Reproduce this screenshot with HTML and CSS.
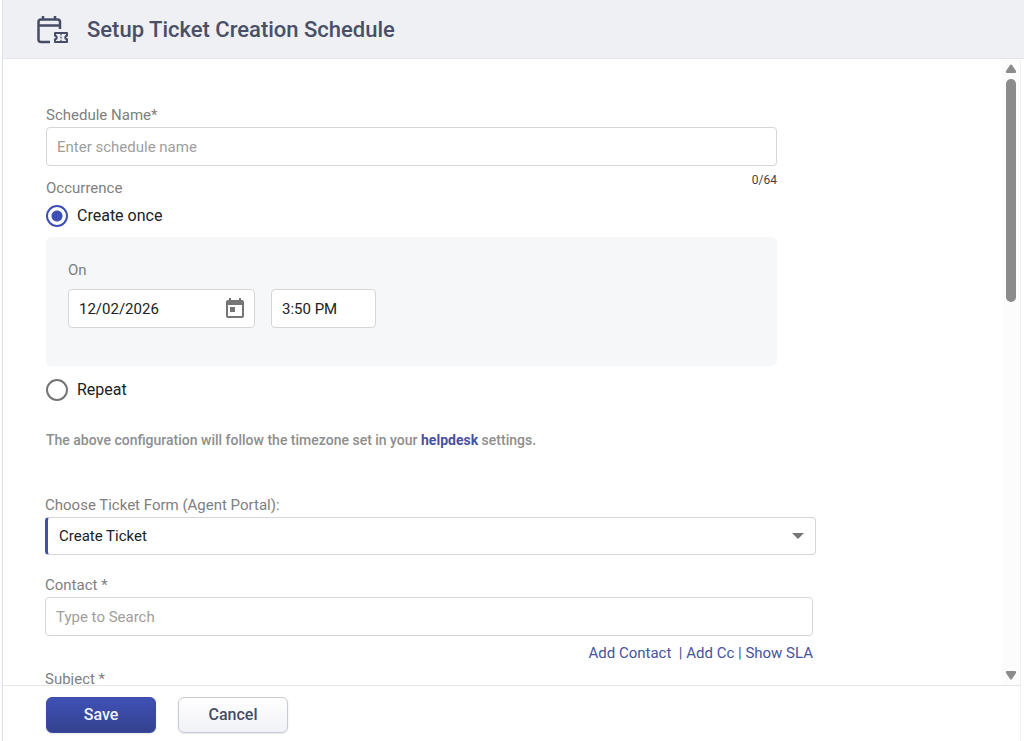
FILE: index.html
```
<!DOCTYPE html>
<html lang="en">
<head>
    <meta charset="UTF-8">
    <meta name="viewport" content="width=device-width, initial-scale=1.0">
    <title>Setup Ticket Creation Schedule</title>
    <link rel="stylesheet" href="styles.css">
</head>
<body>
    <div class="page">
        <header class="header">
            <svg class="header-icon" width="34" height="30" viewBox="0 0 34 30" fill="none" stroke="#474c66" aria-hidden="true">
                <path d="M15 27H6a2.500 2.500 0 0 1-2.500-2.500V7A2.500 2.500 0 0 1 6 4.500h16.500A2.500 2.500 0 0 1 25 7v7" stroke-width="2.500"/>
                <path d="M3.500 10.500h21" stroke-width="2.500"/>
                <path d="M8 1v4M20 1v4" stroke-width="2.500"/>
                <path d="M20 18h12v2.800a1.700 1.700 0 0 0 0 3.400V27H20v-2.800a1.700 1.700 0 0 0 0-3.400z" stroke-width="2" stroke-linejoin="round"/>
                <path d="M26 18.500v2M26 21.600v2M26 24.700v2" stroke-width="1.200"/>
            </svg>
            <h1>Setup Ticket Creation Schedule</h1>
        </header>

        <div class="content">
            <form class="form" id="schedule-form">
                <section class="schedule">
                    <label class="label" for="schedule-name">Schedule Name*</label>
                    <input class="input" id="schedule-name" type="text" maxlength="64" placeholder="Enter schedule name">
                    <div class="occurrence-row">
                        <span class="label" id="occurrence-label">Occurrence</span>
                        <span class="counter">0/64</span>
                    </div>

                    <div role="radiogroup" aria-labelledby="occurrence-label">
                        <label class="radio"><input type="radio" name="occurrence" value="once" checked>Create once</label>
                        <div class="panel">
                            <label class="label" for="date">On</label>
                            <div class="date-row">
                                <div class="date-box">
                                    <input id="date" type="text" value="12/02/2026">
                                    <button type="button" class="calendar-btn" aria-label="Open calendar">
                                        <svg width="24" height="24" viewBox="0 0 24 24" fill="#757575" aria-hidden="true">
                                            <path d="M19 3h-1V1h-2v2H8V1H6v2H5c-1.110 0-1.990.9-1.990 2L3 19c0 1.100.89 2 2 2h14c1.100 0 2-.9 2-2V5c0-1.100-.9-2-2-2zm0 16H5V8h14v11zM7 10h5v5H7z"/>
                                        </svg>
                                    </button>
                                </div>
                                <input class="input time" type="text" value="3:50 PM" aria-label="Time">
                            </div>
                        </div>
                        <label class="radio"><input type="radio" name="occurrence" value="repeat">Repeat</label>
                    </div>

                    <p class="note">The above configuration will follow the timezone set in your <a href="#">helpdesk</a> settings.</p>
                </section>

                <section class="ticket">
                    <label class="label" for="ticket-form">Choose Ticket Form (Agent Portal):</label>
                    <div class="select-box">
                        <select id="ticket-form">
                            <option>Create Ticket</option>
                        </select>
                        <svg class="caret" width="12" height="6" viewBox="0 0 12 6" fill="#757575" aria-hidden="true"><path d="M0 0h12L6 6z"/></svg>
                    </div>

                    <div class="contact">
                        <label class="label" for="contact">Contact *</label>
                        <input class="input" id="contact" type="text" placeholder="Type to Search">
                        <div class="links"><a href="#">Add Contact</a>&nbsp; | <a href="#">Add Cc</a> | <a href="#">Show SLA</a></div>
                    </div>

                    <label class="label" for="subject">Subject *</label>
                    <input class="input" id="subject" type="text">
                </section>
            </form>

            <div class="scrollbar" aria-hidden="true">
                <svg width="12" height="9" viewBox="0 0 12 9" fill="#8b8b8b"><path d="M5 1q1-1 2 0l4 6q.8 2-1 2H2Q.2 9 1 7z"/></svg>
                <div class="track"><div class="thumb"></div></div>
                <svg width="12" height="9" viewBox="0 0 12 9" fill="#8b8b8b"><path d="M5 8q1 1 2 0l4-6q.8-2-1-2H2Q.2 0 1 2z"/></svg>
            </div>
        </div>

        <footer class="footer">
            <button class="btn btn-primary" type="submit" form="schedule-form">Save</button>
            <button class="btn" type="button">Cancel</button>
        </footer>
    </div>
</body>
</html>
```
FILE: styles.css
```
* { margin: 0; padding: 0; box-sizing: border-box; }

body {
    font-family: Roboto, "Liberation Sans", sans-serif;
    font-size: 15px;
    line-height: 20px;
    color: #212121;
    background: #fff;
}

input, select, button {
    font: inherit;
    color: inherit;
}

a {
    color: #4653a0;
    text-decoration: none;
}

.page {
    display: flex;
    flex-direction: column;
    height: 100vh;
    margin-left: 2px;
    border-left: 1px solid #dcdfee;
}

.header {
    display: flex;
    align-items: center;
    gap: 18px;
    height: 59px;
    flex-shrink: 0;
    padding: 1px 0 0 32px;
    background: #eef0f4;
    border-bottom: 1px solid #e2e4ea;
}

.header h1 {
    font-size: 22px;
    font-weight: 500;
    line-height: 28px;
    color: #4a4f68;
}

.content {
    display: flex;
    flex: 1;
    min-height: 0;
    margin-right: 3px;
    border-right: 1px solid #eef0f3;
}

.form {
    flex: 1;
    overflow: hidden;
    padding: 44px 24px 0 42px;
}

.schedule {
    max-width: 732px;
    padding-left: 1px;
}

.label {
    display: block;
    line-height: 24px;
    color: #808080;
}

.input {
    display: block;
    width: 100%;
    height: 39px;
    padding: 0 10px;
    background: #fff;
    border: 1px solid #d6d6d6;
    border-radius: 4px;
}

.input::placeholder {
    color: #9e9e9e;
    opacity: 1;
}

.occurrence-row {
    display: flex;
    justify-content: space-between;
    padding-top: 4px;
}

.occurrence-row .label {
    padding-top: 6px;
}

.counter {
    font-size: 12px;
    color: #424242;
}

.radio {
    display: flex;
    align-items: center;
    gap: 9px;
    height: 32px;
    font-size: 16px;
}

.radio input {
    appearance: none;
    width: 22px;
    height: 22px;
    border: 2px solid #757575;
    border-radius: 50%;
}

.radio input:checked {
    border-color: #3f51b5;
    background: radial-gradient(circle, #3f51b5 5px, #fff 6px);
}

.panel {
    margin: 5px 0 8px;
    padding: 21px 22px 38px;
    background: #f6f7f9;
    border-radius: 6px;
}

.date-row {
    display: flex;
    gap: 16px;
    padding-top: 7px;
}

.date-box {
    display: flex;
    align-items: center;
    width: 187px;
    height: 39px;
    padding: 0 7px 0 10px;
    background: #fff;
    border: 1px solid #d6d6d6;
    border-radius: 4px;
}

.date-box input {
    flex: 1;
    min-width: 0;
    border: none;
    outline: none;
}

.calendar-btn {
    display: flex;
    background: none;
    border: none;
    cursor: pointer;
}

.time {
    width: 105px;
}

.note {
    padding-top: 24px;
    font-size: 14px;
    font-weight: 500;
    color: #8e8e8e;
}

.note a {
    font-weight: 700;
}

.ticket {
    max-width: 771px;
    padding-top: 43px;
}

.select-box {
    display: flex;
    align-items: center;
    height: 38px;
    margin-bottom: 18px;
    padding-right: 11px;
    border: 1px solid #d6d6d6;
    border-left: 3px solid #3f51b5;
    border-radius: 4px;
}

.select-box select {
    appearance: none;
    flex: 1;
    height: 36px;
    padding: 0 11px;
    background: none;
    border: none;
    outline: none;
}

.contact {
    padding-right: 3px;
}

.links {
    padding: 7px 0 4px;
    text-align: right;
    color: #4653a0;
}

.scrollbar {
    display: flex;
    flex-direction: column;
    align-items: center;
    width: 18px;
    padding: 5px 0;
    background: #fcfcfc;
}

.track {
    flex: 1;
    padding: 6px 0;
}

.thumb {
    width: 10px;
    height: 38%;
    background: #8b8b8b;
    border-radius: 5px;
}

.footer {
    display: flex;
    gap: 22px;
    flex-shrink: 0;
    margin-right: 3px;
    padding: 11px 43px 8px;
    border-top: 1px solid #e2e4e8;
    border-right: 1px solid #eef0f3;
}

.btn {
    width: 110px;
    height: 36px;
    font-size: 16px;
    font-weight: 500;
    color: #474c66;
    background: linear-gradient(#fff, #f1f2f7);
    border: 1px solid #c9cbd3;
    border-radius: 6px;
    box-shadow: 0 1px 2px rgba(0, 0, 0, 0.1);
    cursor: pointer;
}

.btn-primary {
    color: #f1f2fa;
    background: linear-gradient(#3f51b5, #344190);
    border-color: #3a4aa5;
}
```
